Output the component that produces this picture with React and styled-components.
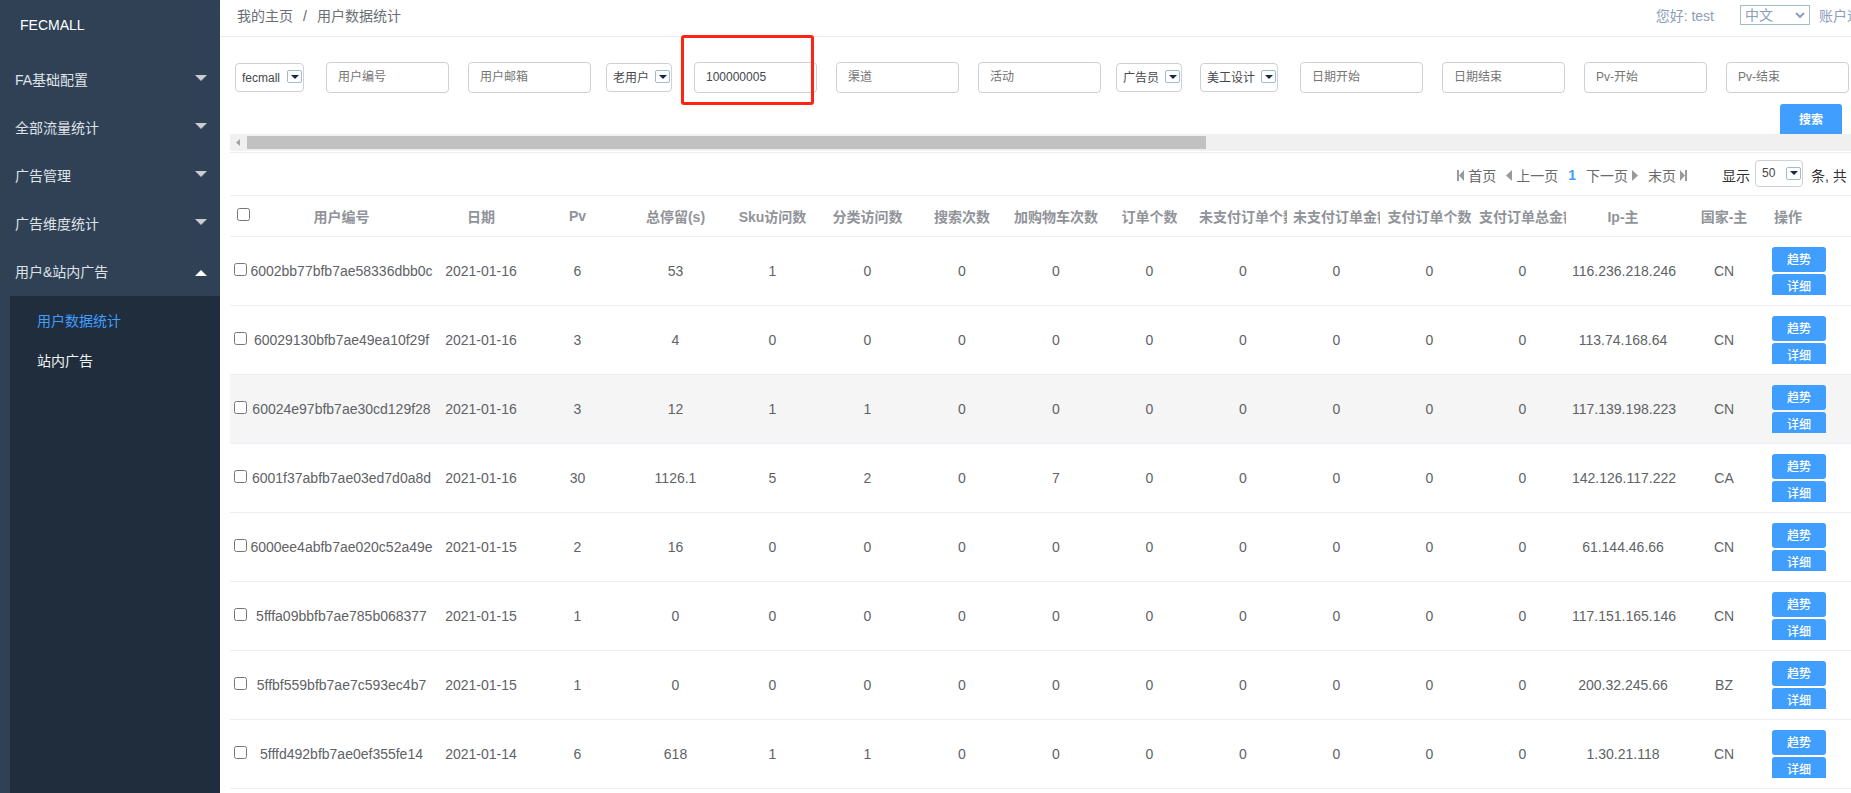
import React from "react";
import styled, { createGlobalStyle } from "styled-components";

const GlobalStyle = createGlobalStyle`
  * { box-sizing: border-box; }
  body {
    margin: 0;
    background: #fff;
    color: #606266;
    font-family: "Liberation Sans", Arial, "Noto Sans CJK SC", sans-serif;
    font-size: 14px;
  }
  button, input, select { font-family: inherit; }
`;

const Page = styled.div`
  display: flex;
  height: 100vh;
  overflow: hidden;
`;

const Sidebar = styled.nav`
  flex: 0 0 220px;
  display: flex;
  flex-direction: column;
  background: #304156;
`;

const Brand = styled.a`
  height: 56px;
  padding: 0 20px;
  line-height: 50px;
  color: #fff;
  text-decoration: none;
`;

const MenuButton = styled.button`
  display: flex;
  align-items: center;
  justify-content: space-between;
  height: 48px;
  padding: 0 13px 2px 15px;
  border: 0;
  background: none;
  color: #dfe2e6;
  font-size: 14px;
  cursor: pointer;
`;

const Caret = styled.svg`
  width: 12px;
  height: 6px;
  margin: ${(p) => (p.$open ? "4px 0 0" : "0 0 2px")};
  fill: ${(p) => (p.$open ? "#fff" : "#c8cdd4")};
`;

const SubMenu = styled.div`
  flex: 1;
  display: flex;
  flex-direction: column;
  margin-left: 10px;
  padding-top: 5px;
  background: #1f2d3d;
`;

const SubLink = styled.a`
  height: 40px;
  padding-left: 27px;
  line-height: 40px;
  color: ${(p) => (p.$active ? "#409eff" : "#f0f2f4")};
  text-decoration: none;
`;

const Main = styled.main`
  flex: 1;
  min-width: 0;
  overflow: hidden;
`;

const Header = styled.header`
  display: flex;
  align-items: center;
  justify-content: space-between;
  height: 37px;
  padding: 0 0 6px 17px;
  border-bottom: 1px solid #eaebee;
`;

const Breadcrumb = styled.div`
  display: flex;
  align-items: baseline;
  gap: 10px;
  padding-bottom: 1px;
`;

const CrumbLink = styled.a`
  color: #6b6e73;
  text-decoration: none;
`;

const Account = styled.div`
  display: flex;
  align-items: center;
  color: #8c9dbb;
`;

const LanguageBox = styled.div`
  display: grid;
  align-items: center;
  position: relative;
  width: 70px;
  margin: 0 9px 0 26px;
`;

const LanguageSelect = styled.select`
  appearance: none;
  width: 100%;
  height: 20px;
  padding: 0 4px;
  border: 1px solid #a0bfc0;
  border-radius: 0;
  background: #fff;
  color: #8c9dbb;
  font-size: 14px;
  line-height: 18px;
`;

const Chevron = styled.svg`
  position: absolute;
  right: 5px;
  width: 10px;
  height: 6px;
  fill: none;
  stroke: #8c9dbb;
  stroke-width: 2;
  pointer-events: none;
`;

const AccountLink = styled.a`
  width: 32px;
  overflow: hidden;
  white-space: nowrap;
  color: inherit;
  text-decoration: none;
`;

const Content = styled.div`
  padding-left: 10px;
`;

const FilterForm = styled.form`
  padding-top: 25px;
`;

const Fields = styled.div`
  display: flex;
  align-items: center;
  height: 31px;
`;

const FieldBox = styled.div`
  position: relative;
  flex: none;
  margin: 0 10px 0 9px;
`;

const TextInput = styled.input`
  display: block;
  width: 123px;
  height: 31px;
  padding: 0 11px 2px;
  border: 1px solid #ccd0d9;
  border-radius: 4px;
  outline: 0;
  background: #fff;
  color: #44474d;
  font-size: 12px;
  &::placeholder { color: #757575; }
`;

const Highlight = styled.span`
  position: absolute;
  inset: -27px 3px -12px -13px;
  border: 3px solid #ff2314;
  border-radius: 3px;
  pointer-events: none;
`;

const SelectBox = styled.div`
  position: relative;
  flex: none;
  width: ${(p) => p.$width}px;
  margin: ${(p) => p.$margin || "0 13px 0 5px"};
`;

const SmallSelect = styled.select`
  display: block;
  appearance: none;
  width: 100%;
  height: ${(p) => p.$height}px;
  padding: 0 0 0 6px;
  border: 1px solid #ccd0d9;
  border-radius: 4px;
  outline: 0;
  background: #fff;
  color: #44474d;
  font-size: 12px;
`;

const SelectArrow = styled.span`
  position: absolute;
  top: 7px;
  right: 2px;
  display: grid;
  place-items: center;
  width: 15px;
  height: 13px;
  border: 1px solid #9fbccb;
  border-radius: 2px;
  background: #fff;
  pointer-events: none;
  svg { width: 8px; height: 4px; fill: #16284a; }
`;

const SearchRow = styled.div`
  display: flex;
  justify-content: flex-end;
  height: 30px;
  margin-top: 11px;
  padding-right: 9px;
  overflow: hidden;
`;

const SearchButton = styled.button`
  width: 62px;
  height: 32px;
  padding: 0 0 3px;
  border: 0;
  border-radius: 3px;
  background: #409eff;
  color: #fff;
  font-size: 12px;
  font-weight: 700;
  cursor: pointer;
`;

const ScrollTrack = styled.div`
  display: flex;
  align-items: center;
  height: 17px;
  background: #f0f0f0;
`;

const ScrollArrow = styled.svg`
  width: 17px;
  height: 17px;
  fill: #a3a3a3;
`;

const ScrollThumb = styled.div`
  width: calc(60% - 14px);
  height: 13px;
  background: #c1c1c1;
`;

const Pager = styled.div`
  display: flex;
  align-items: center;
  justify-content: flex-end;
  height: 44px;
  margin-top: 1px;
  padding-top: 2px;
  border: solid #ebeef5;
  border-width: 1px 0;
  white-space: nowrap;
`;

const PageLink = styled.a`
  display: flex;
  align-items: center;
  gap: 4px;
  margin-right: 10px;
  color: ${(p) => (p.$current ? "#409eff" : "#6a6a6a")};
  font-weight: ${(p) => (p.$current ? 700 : 400)};
  text-decoration: none;
  svg { height: 11px; fill: #9a9a9a; }
`;

const PageSize = styled.div`
  display: flex;
  align-items: center;
  margin-left: 25px;
  color: #303133;
`;

const Total = styled.span`
  width: 40px;
`;

const Table = styled.table`
  width: 100%;
  border-collapse: separate;
  border-spacing: 0;
  table-layout: fixed;
  text-align: center;
  color: #606266;
`;

const HeadCell = styled.th`
  height: 41px;
  padding: 0 ${(p) => (p.$flush ? 0 : 3)}px;
  border-bottom: 1px solid #ebeef5;
  white-space: nowrap;
  color: #909399;
  font-weight: 700;
  text-align: ${(p) => p.$align || "center"};
`;

const HeadLabel = styled.span`
  display: block;
  overflow: hidden;
`;

const Row = styled.tr`
  background: ${(p) => (p.$hovered ? "#f5f5f5" : "#fff")};
`;

const Cell = styled.td`
  height: 69px;
  padding: 0 ${(p) => (p.$flush ? 0 : 3)}px;
  border-bottom: 1px solid #ebeef5;
  white-space: nowrap;
`;

const CheckBox = styled.input`
  display: block;
  width: 13px;
  height: 13px;
  margin: 0 0 3px ${(p) => (p.$head ? 7 : 4)}px;
`;

const Actions = styled.div`
  display: flex;
  flex-direction: column;
  gap: 2px;
  height: 48px;
  margin-left: 1px;
  overflow: hidden;
`;

const ActionButton = styled.button`
  flex: none;
  width: 54px;
  height: 25px;
  padding: 0 0 3px;
  border: 0;
  border-radius: 3px;
  background: #409eff;
  color: #fff;
  font-size: 12px;
  font-weight: 500;
  cursor: pointer;
`;

const menus = ["FA基础配置", "全部流量统计", "广告管理", "广告维度统计", "用户&站内广告"];

const fields = [
  { type: "select", label: "站点", value: "fecmall", width: 69 },
  { label: "用户编号" },
  { label: "用户邮箱" },
  { type: "select", label: "用户类型", value: "老用户", width: 66 },
  { label: "广告编号", value: "100000005", marked: true },
  { label: "渠道" },
  { label: "活动" },
  { type: "select", label: "广告员", value: "广告员", width: 66 },
  { type: "select", label: "美工设计", value: "美工设计", width: 78 },
  { label: "日期开始" },
  { label: "日期结束" },
  { label: "Pv-开始" },
  { label: "Pv-结束" },
];

const columns = [
  ["用户编号", 183],
  ["日期", 96],
  ["Pv", 97],
  ["总停留(s)", 99],
  ["Sku访问数", 95],
  ["分类访问数", 95],
  ["搜索次数", 94],
  ["加购物车次数", 94],
  ["订单个数", 93],
  ["未支付订单个数", 94],
  ["未支付订单金额", 93],
  ["支付订单个数", 93],
  ["支付订单总金额", 93],
  ["Ip-主", 108],
  ["国家-主", 94],
];

const rows = [
  ["6002bb77bfb7ae58336dbb0c", "2021-01-16", 6, 53, 1, 0, 0, 0, 0, 0, 0, 0, 0, "116.236.218.246", "CN"],
  ["60029130bfb7ae49ea10f29f", "2021-01-16", 3, 4, 0, 0, 0, 0, 0, 0, 0, 0, 0, "113.74.168.64", "CN"],
  ["60024e97bfb7ae30cd129f28", "2021-01-16", 3, 12, 1, 1, 0, 0, 0, 0, 0, 0, 0, "117.139.198.223", "CN"],
  ["6001f37abfb7ae03ed7d0a8d", "2021-01-16", 30, 1126.1, 5, 2, 0, 7, 0, 0, 0, 0, 0, "142.126.117.222", "CA"],
  ["6000ee4abfb7ae020c52a49e", "2021-01-15", 2, 16, 0, 0, 0, 0, 0, 0, 0, 0, 0, "61.144.46.66", "CN"],
  ["5fffa09bbfb7ae785b068377", "2021-01-15", 1, 0, 0, 0, 0, 0, 0, 0, 0, 0, 0, "117.151.165.146", "CN"],
  ["5ffbf559bfb7ae7c593ec4b7", "2021-01-15", 1, 0, 0, 0, 0, 0, 0, 0, 0, 0, 0, "200.32.245.66", "BZ"],
  ["5fffd492bfb7ae0ef355fe14", "2021-01-14", 6, 618, 1, 1, 0, 0, 0, 0, 0, 0, 0, "1.30.21.118", "CN"],
];

function SmallDropdown({ label, value, width, height, margin }) {
  return (
    <SelectBox $width={width} $margin={margin}>
      <SmallSelect aria-label={label} $height={height} defaultValue={value}>
        <option>{value}</option>
      </SmallSelect>
      <SelectArrow>
        <svg viewBox="0 0 8 4"><path d="M0 0h8L4 4z" /></svg>
      </SelectArrow>
    </SelectBox>
  );
}

function PageArrow({ back, bar }) {
  const width = bar ? 7 : 6;
  return (
    <svg width={width} viewBox={`0 0 ${width} 11`}>
      <g transform={back ? undefined : `translate(${width} 0) scale(-1 1)`}>
        {bar && <path d="M0 0h2v11H0z" />}
        <path d={bar ? "M7 0v11L2 5.5z" : "M6 0v11L0 5.5z"} />
      </g>
    </svg>
  );
}

export default function App() {
  return (
    <Page>
      <GlobalStyle />
      <Sidebar>
        <Brand href="#home">FECMALL</Brand>
        {menus.map((name, i) => {
          const open = i === menus.length - 1;
          return (
            <MenuButton key={name} type="button" aria-expanded={open}>
              {name}
              <Caret $open={open} viewBox="0 0 12 6">
                <path d={open ? "M0 6h12L6 0z" : "M0 0h12L6 6z"} />
              </Caret>
            </MenuButton>
          );
        })}
        <SubMenu>
          <SubLink href="#users" $active>用户数据统计</SubLink>
          <SubLink href="#ads">站内广告</SubLink>
        </SubMenu>
      </Sidebar>
      <Main>
        <Header>
          <Breadcrumb>
            <CrumbLink href="#home">我的主页</CrumbLink>
            <span>/</span>
            <CrumbLink href="#users">用户数据统计</CrumbLink>
          </Breadcrumb>
          <Account>
            <span>您好: test</span>
            <LanguageBox>
              <LanguageSelect aria-label="语言"><option>中文</option></LanguageSelect>
              <Chevron viewBox="0 0 10 6"><path d="M1 1l4 4 4-4" /></Chevron>
            </LanguageBox>
            <AccountLink href="#logout">账户退出</AccountLink>
          </Account>
        </Header>
        <Content>
          <FilterForm onSubmit={(e) => e.preventDefault()}>
            <Fields>
              {fields.map((f) =>
                f.type === "select" ? (
                  <SmallDropdown
                    key={f.label}
                    label={f.label}
                    value={f.value}
                    width={f.width}
                    height={29}
                  />
                ) : (
                  <FieldBox key={f.label}>
                    <TextInput aria-label={f.label} placeholder={f.label} defaultValue={f.value} />
                    {f.marked && <Highlight />}
                  </FieldBox>
                )
              )}
            </Fields>
            <SearchRow>
              <SearchButton type="submit">搜索</SearchButton>
            </SearchRow>
          </FilterForm>
          <ScrollTrack>
            <ScrollArrow viewBox="0 0 17 17"><path d="M10 5v7L6 8.5z" /></ScrollArrow>
            <ScrollThumb />
          </ScrollTrack>
          <Pager>
            <PageLink href="#first"><PageArrow back bar />首页</PageLink>
            <PageLink href="#prev"><PageArrow back />上一页</PageLink>
            <PageLink href="#1" $current>1</PageLink>
            <PageLink href="#next">下一页<PageArrow /></PageLink>
            <PageLink href="#last">末页<PageArrow bar /></PageLink>
            <PageSize>
              <span>显示</span>
              <SmallDropdown label="每页条数" value="50" width={48} height={27} margin="0 8px 4px 5px" />
              <Total>条, 共</Total>
            </PageSize>
          </Pager>
          <Table>
            <colgroup>
              <col width="20" />
              {columns.map(([name, width]) => <col key={name} width={width} />)}
              <col />
            </colgroup>
            <thead>
              <tr>
                <HeadCell $flush>
                  <CheckBox $head type="checkbox" aria-label="全选" />
                </HeadCell>
                {columns.map(([name]) => (
                  <HeadCell key={name}><HeadLabel>{name}</HeadLabel></HeadCell>
                ))}
                <HeadCell $align="left"><HeadLabel>操作</HeadLabel></HeadCell>
              </tr>
            </thead>
            <tbody>
              {rows.map((row, r) => (
                <Row key={row[0]} $hovered={r === 2}>
                  <Cell $flush><CheckBox type="checkbox" aria-label={row[0]} /></Cell>
                  {row.map((value, c) => <Cell key={c} $flush={c === 0}>{value}</Cell>)}
                  <Cell $flush>
                    <Actions>
                      <ActionButton type="button">趋势</ActionButton>
                      <ActionButton type="button">详细</ActionButton>
                    </Actions>
                  </Cell>
                </Row>
              ))}
            </tbody>
          </Table>
        </Content>
      </Main>
    </Page>
  );
}
